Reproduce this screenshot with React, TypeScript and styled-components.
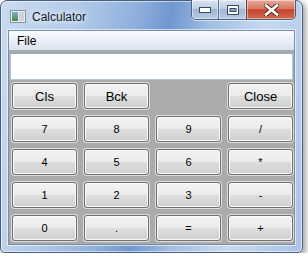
import React from "react";
import styled, { createGlobalStyle, css } from "styled-components";

const GlobalStyle = createGlobalStyle`
  body {
    margin: 0;
    background: #ffffff;
    font-family: "Liberation Sans", "DejaVu Sans", sans-serif;
  }
`;

const topRow = ["Cls", "Bck", "", "Close"];
const keys = ["7", "8", "9", "/", "4", "5", "6", "*", "1", "2", "3", "-", "0", ".", "=", "+"];

const App: React.FC = () => {
  return (
    <>
      <GlobalStyle />
      <Window>
        <TitleBar>
          <AppIcon width="16" height="13" viewBox="0 0 16 13">
            <defs>
              <linearGradient id="ig" x1="0" y1="0" x2="0" y2="1">
                <stop offset="0" stopColor="#7fb6c9" />
                <stop offset="1" stopColor="#3f8a4c" />
              </linearGradient>
            </defs>
            <rect x="0.5" y="0.5" width="15" height="12" fill="#e9ecef" stroke="#8a9199" />
            <rect x="2" y="2" width="6" height="9" fill="url(#ig)" />
            <rect x="9" y="2" width="5" height="9" fill="#cfd4da" />
          </AppIcon>
          <Title>Calculator</Title>
          <CaptionGroup>
            <CaptionButton $w={26}>
              <svg width="12" height="6" viewBox="0 0 12 6">
                <rect x="0.5" y="0.5" width="11" height="5" fill="#fff" stroke="#3b4a5e" />
              </svg>
            </CaptionButton>
            <CaptionButton $w={27}>
              <svg width="12" height="10" viewBox="0 0 12 10">
                <rect x="0.5" y="0.5" width="11" height="9" fill="#fff" stroke="#3b4a5e" />
                <rect x="3" y="3.5" width="6" height="3" fill="#8ea6c4" stroke="#3b4a5e" />
              </svg>
            </CaptionButton>
            <CaptionButton $w={48} $close>
              <svg width="15" height="12" viewBox="0 0 15 12">
                <path d="M2 1.5 L13 10.5 M13 1.5 L2 10.5" stroke="#5a2a22" strokeWidth="4.6" strokeLinecap="square" />
                <path d="M2 1.5 L13 10.5 M13 1.5 L2 10.5" stroke="#ffffff" strokeWidth="2.6" strokeLinecap="square" />
              </svg>
            </CaptionButton>
          </CaptionGroup>
        </TitleBar>
        <Client>
          <MenuBar>
            <MenuItem>File</MenuItem>
          </MenuBar>
          <Panel>
            <Display />
            <Keypad>
              {topRow.map((label, i) =>
                label ? (
                  <Key key={"t" + i} $large>
                    {label}
                  </Key>
                ) : (
                  <span key={"t" + i} />
                )
              )}
              {keys.map((k) => (
                <Key key={k}>{k}</Key>
              ))}
            </Keypad>
          </Panel>
        </Client>
      </Window>
    </>
  );
};

export default App;

const Window = styled.div`
  width: 303px;
  height: 253px;
  box-sizing: border-box;
  border: 1px solid #4a5f7c;
  border-radius: 7px 7px 5px 5px;
  padding: 0 7px 7px 7px;
  display: flex;
  flex-direction: column;
  background: linear-gradient(
    100deg,
    #c9dbf0 0%,
    #b3cbe9 22%,
    #8fb0dc 40%,
    #6f97cf 50%,
    #a3bfe5 62%,
    #c6d9f0 78%,
    #a9c3e6 100%
  );
  box-shadow: 2px 3px 6px 1px rgba(0, 0, 0, 0.35), inset 0 0 0 1px rgba(255, 255, 255, 0.55);
`;

const TitleBar = styled.div`
  height: 29px;
  display: flex;
  align-items: center;
  padding-left: 2px;
`;

const AppIcon = styled.svg`
  margin-right: 6px;
  margin-top: 2px;
`;

const Title = styled.span`
  font-size: 12px;
  color: #0f1a2a;
  margin-top: 3px;
  text-shadow: 0 0 6px rgba(255, 255, 255, 0.95), 0 0 10px rgba(255, 255, 255, 0.8);
`;

const CaptionGroup = styled.div`
  margin-left: auto;
  margin-right: -1px;
  align-self: flex-start;
  margin-top: -1px;
  display: flex;
  height: 19px;
  border: 1px solid #4d607c;
  border-top: none;
  border-radius: 0 0 5px 5px;
  overflow: hidden;
  box-shadow: 0 1px 0 rgba(255, 255, 255, 0.6);
`;

const CaptionButton = styled.div<{ $w: number; $close?: boolean }>`
  width: ${(p) => p.$w}px;
  display: flex;
  align-items: center;
  justify-content: center;
  border-left: 1px solid #5b6f8c;
  box-shadow: inset 0 0 0 1px rgba(255, 255, 255, 0.45);
  background: linear-gradient(#dbe5f2, #bccde3 45%, #9fb6d6 50%, #b8cce6 100%);
  &:first-child {
    border-left: none;
  }
  ${(p) =>
    p.$close &&
    css`
      border-left-color: #6b3a33;
      background: linear-gradient(#e9a999, #d77a64 45%, #c5452d 52%, #d26a4f 100%);
    `}
`;

const Client = styled.div`
  flex: 1;
  display: flex;
  flex-direction: column;
  border: 1px solid #7c8da6;
  box-shadow: 0 0 0 1px rgba(255, 255, 255, 0.6);
  background: #ababab;
`;

const MenuBar = styled.div`
  height: 19px;
  display: flex;
  align-items: center;
  background: linear-gradient(#f9fbfe, #e6edf7 60%, #d9e2f0);
`;

const MenuItem = styled.span`
  font-size: 12px;
  color: #000;
  padding: 0 8px;
`;

const Panel = styled.div`
  display: flex;
  flex-direction: column;
  gap: 3px;
  padding: 3px 1px 3px 3px;
`;

const Display = styled.div`
  height: 27px;
  box-sizing: border-box;
  margin-left: -2px;
  background: #ffffff;
  border: 1px solid #a9c8e3;
  border-top-color: #86abcf;
`;

const Keypad = styled.div`
  display: grid;
  grid-template-columns: repeat(4, 65px);
  grid-auto-rows: 26px;
  column-gap: 7px;
  row-gap: 7px;
`;

const Key = styled.button<{ $large?: boolean }>`
  box-sizing: border-box;
  margin: 0;
  padding: 0;
  border: 1px solid #707070;
  border-radius: 3px;
  background: linear-gradient(#f3f3f3 0%, #ebebeb 48%, #dddddd 52%, #d0d0d0 100%);
  box-shadow: inset 0 0 0 1px #fbfbfb, 0 0 0 1px #dedede;
  font-family: "Liberation Sans", "DejaVu Sans", sans-serif;
  font-size: ${(p) => (p.$large ? "13px" : "11px")};
  color: #000;
`;
